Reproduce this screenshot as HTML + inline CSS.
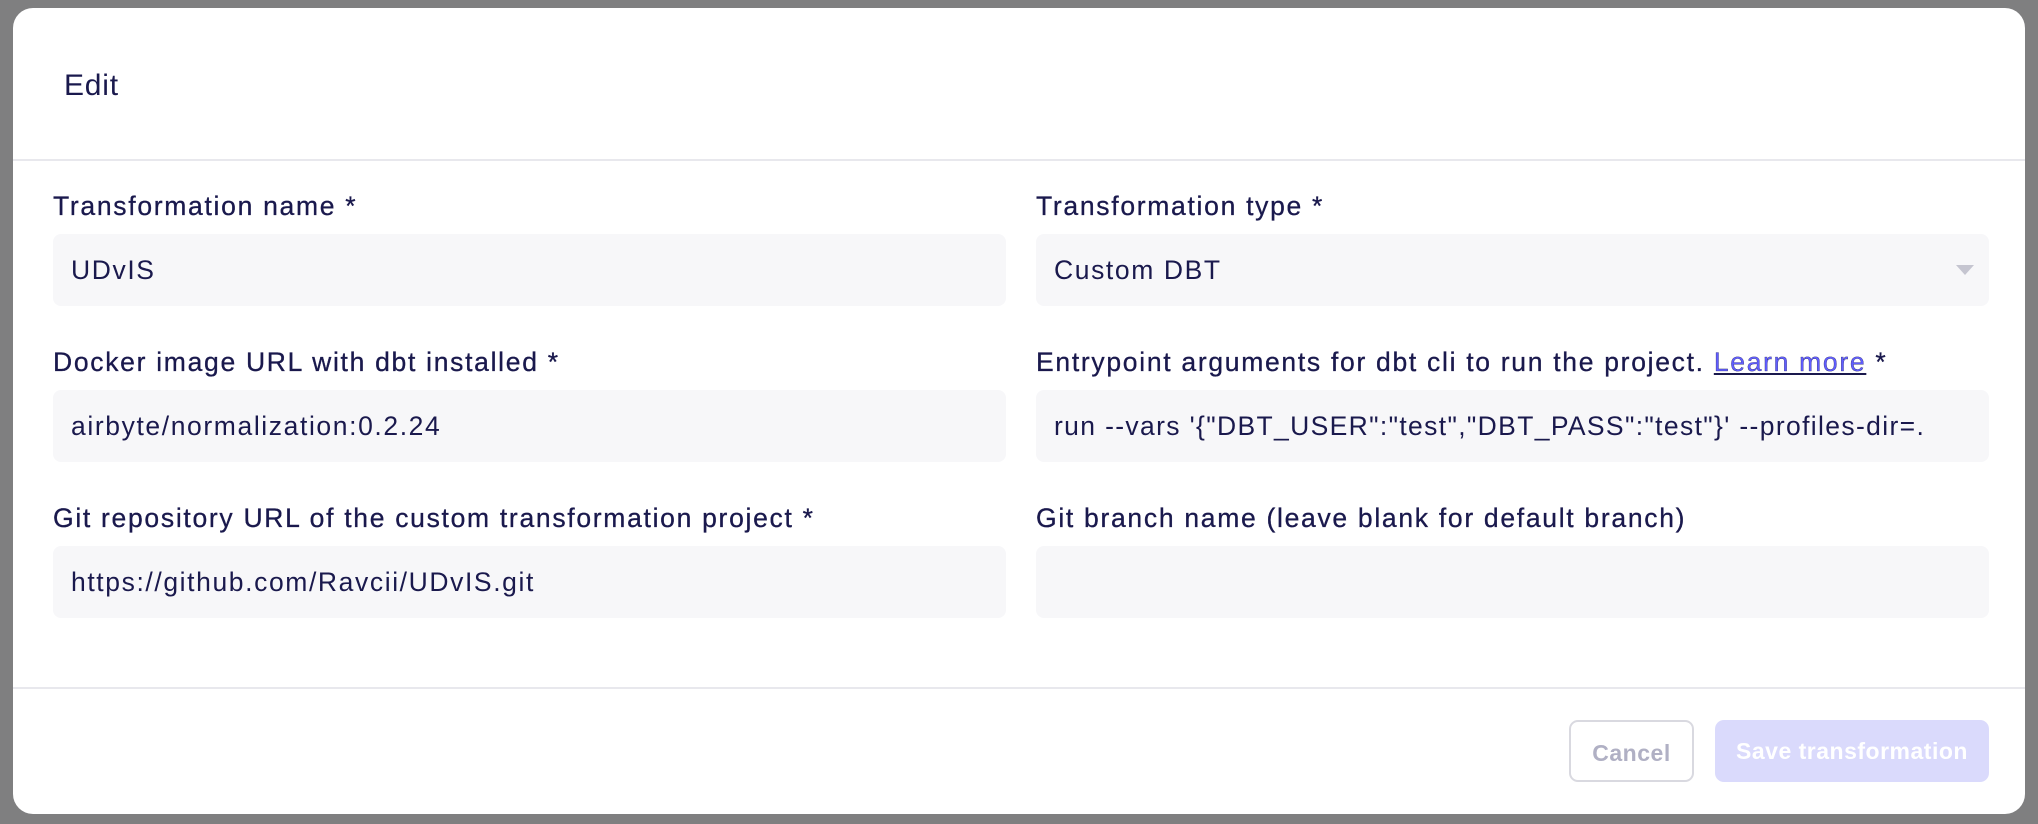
<!DOCTYPE html>
<html><head><meta charset="utf-8"><style>
html,body{margin:0;padding:0;width:2038px;height:824px;overflow:hidden;background:#7f7f80;font-family:"Liberation Sans",Arial,sans-serif;color:#1a194d}
.modal{position:absolute;left:13px;top:8px;width:2012px;height:806px;background:#fff;border-radius:20px;overflow:hidden}
.t{position:absolute;white-space:nowrap}
.h{left:51px;top:56px;font-size:30px;line-height:44px;letter-spacing:0.8px}
.line{position:absolute;left:0;width:2012px;height:2px;background:#e8e8ed}
.lab{font-size:26.5px;font-weight:500;letter-spacing:1.7px;line-height:30px;color:#1a194d;-webkit-text-stroke:0.3px #1a194d}
.in{position:absolute;width:953px;height:72px;background:#f7f7f9;border-radius:8px}
.val{position:absolute;left:18px;top:0;line-height:72px;font-size:26.5px;letter-spacing:1.6px;white-space:nowrap;color:#1a194d}
a{color:#615eff;text-decoration:underline}
.btn{position:absolute;top:712px;height:62px;border-radius:9px;font-size:23px;font-weight:bold;text-align:center;line-height:62px;box-sizing:border-box;letter-spacing:0.5px}
</style></head><body>
<div class="modal">
<div class="t h">Edit</div>
<div class="line" style="top:151px"></div>

<div class="t lab" style="left:40px;top:183px">Transformation name *</div>
<div class="in" style="left:40px;top:226px"><div class="val">UDvIS</div></div>
<div class="t lab" style="left:1023px;top:183px">Transformation type *</div>
<div class="in" style="left:1023px;top:226px"><div class="val">Custom DBT</div>
<svg style="position:absolute;left:920px;top:31px" width="18" height="10"><path d="M0 0 L18 0 L9 10 Z" fill="#c5c5d0"/></svg></div>

<div class="t lab" style="left:40px;top:339px">Docker image URL with dbt installed *</div>
<div class="in" style="left:40px;top:382px"><div class="val">airbyte/normalization:0.2.24</div></div>
<div class="t lab" style="left:1023px;top:339px">Entrypoint arguments for dbt cli to run the project. <a>Learn more</a> *</div>
<div class="in" style="left:1023px;top:382px"><div class="val" style="letter-spacing:1.35px">run --vars '{"DBT_USER":"test","DBT_PASS":"test"}' --profiles-dir=.</div></div>

<div class="t lab" style="left:40px;top:495px">Git repository URL of the custom transformation project *</div>
<div class="in" style="left:40px;top:538px"><div class="val">https://github.com/Ravcii/UDvIS.git</div></div>
<div class="t lab" style="left:1023px;top:495px">Git branch name (leave blank for default branch)</div>
<div class="in" style="left:1023px;top:538px"></div>

<div class="line" style="top:679px"></div>
<div class="btn" style="left:1556px;width:125px;border:2px solid #d9d9e0;color:#b0b0c4">Cancel</div>
<div class="btn" style="left:1702px;width:274px;background:#dadafc;color:#fff">Save transformation</div>
</div>
</body></html>
